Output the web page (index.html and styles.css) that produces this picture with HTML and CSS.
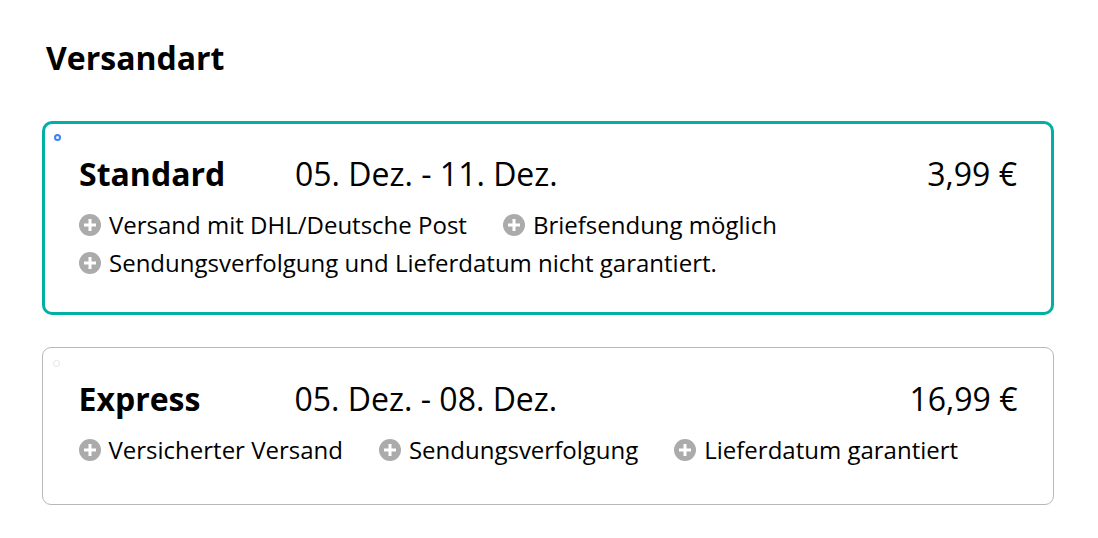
FILE: index.html
```html
<!DOCTYPE html>
<html lang="de">
<head>
<meta charset="utf-8">
<link rel="stylesheet" href="styles.css">
</head>
<body>
<main class="page">
  <h2 class="title">Versandart</h2>
  <div class="option selected">
    <span class="radio"></span>
    <div class="head">
      <span class="name">Standard</span>
      <span class="date">05. Dez. - 11. Dez.</span>
      <span class="price">3,99 €</span>
    </div>
    <ul class="features">
      <li><span class="plus"></span>Versand mit DHL/Deutsche Post</li>
      <li><span class="plus"></span>Briefsendung möglich</li>
      <li><span class="plus"></span>Sendungsverfolgung und Lieferdatum nicht garantiert.</li>
    </ul>
  </div>
  <div class="option">
    <span class="radio"></span>
    <div class="head">
      <span class="name">Express</span>
      <span class="date">05. Dez. - 08. Dez.</span>
      <span class="price">16,99 €</span>
    </div>
    <ul class="features">
      <li><span class="plus"></span>Versicherter Versand</li>
      <li><span class="plus"></span>Sendungsverfolgung</li>
      <li><span class="plus"></span>Lieferdatum garantiert</li>
    </ul>
  </div>
</main>
</body>
</html>
```
FILE: styles.css
```css
* { box-sizing: border-box; }
body {
  margin: 0;
  background: #fff;
  font-family: "Open Sans", "Noto Sans", sans-serif;
  color: #000;
}
.page {
  padding: 36px 44px 0 42px;
  display: flex;
  flex-direction: column;
}
.title {
  margin: 0 0 41px 4px;
  font-size: 32px;
  font-weight: 700;
  line-height: 44px;
}
.option {
  position: relative;
  border: 1.5px solid #b8b8b8;
  border-radius: 9px;
  padding: 29px 35.5px 38px 35.5px;
  margin-bottom: 32px;
}
.option.selected {
  border: 3px solid #00b0a4;
  border-radius: 10px;
  padding: 28px 34px 33px 34px;
}
.radio {
  position: absolute;
  left: 10px;
  top: 12px;
  width: 7px;
  height: 7px;
  border-radius: 50%;
  border: 1px solid #e4e4e4;
}
.selected .radio {
  left: 9px;
  top: 10px;
  border: 2px solid #3b82f6;
}
.head {
  display: flex;
  align-items: baseline;
  line-height: 44px;
}
.name {
  width: 216px;
  font-size: 32px;
  font-weight: 700;
}
.date {
  flex: 1;
  font-size: 32px;
}
.price {
  font-size: 32px;
}
.features {
  list-style: none;
  margin: 13px 0 0 0;
  padding: 0;
  display: flex;
  flex-wrap: wrap;
  column-gap: 36px;
  row-gap: 6px;
}
.features li {
  display: flex;
  align-items: center;
  font-size: 24px;
  line-height: 32px;
}
.plus {
  position: relative;
  width: 22px;
  height: 22px;
  border-radius: 50%;
  background: #ababab;
  margin-right: 8px;
  flex: none;
}
.plus::before, .plus::after {
  content: "";
  position: absolute;
  background: #fff;
  left: 50%;
  top: 50%;
  transform: translate(-50%, -50%);
}
.plus::before { width: 12px; height: 3px; }
.plus::after { width: 3px; height: 12px; }
```
